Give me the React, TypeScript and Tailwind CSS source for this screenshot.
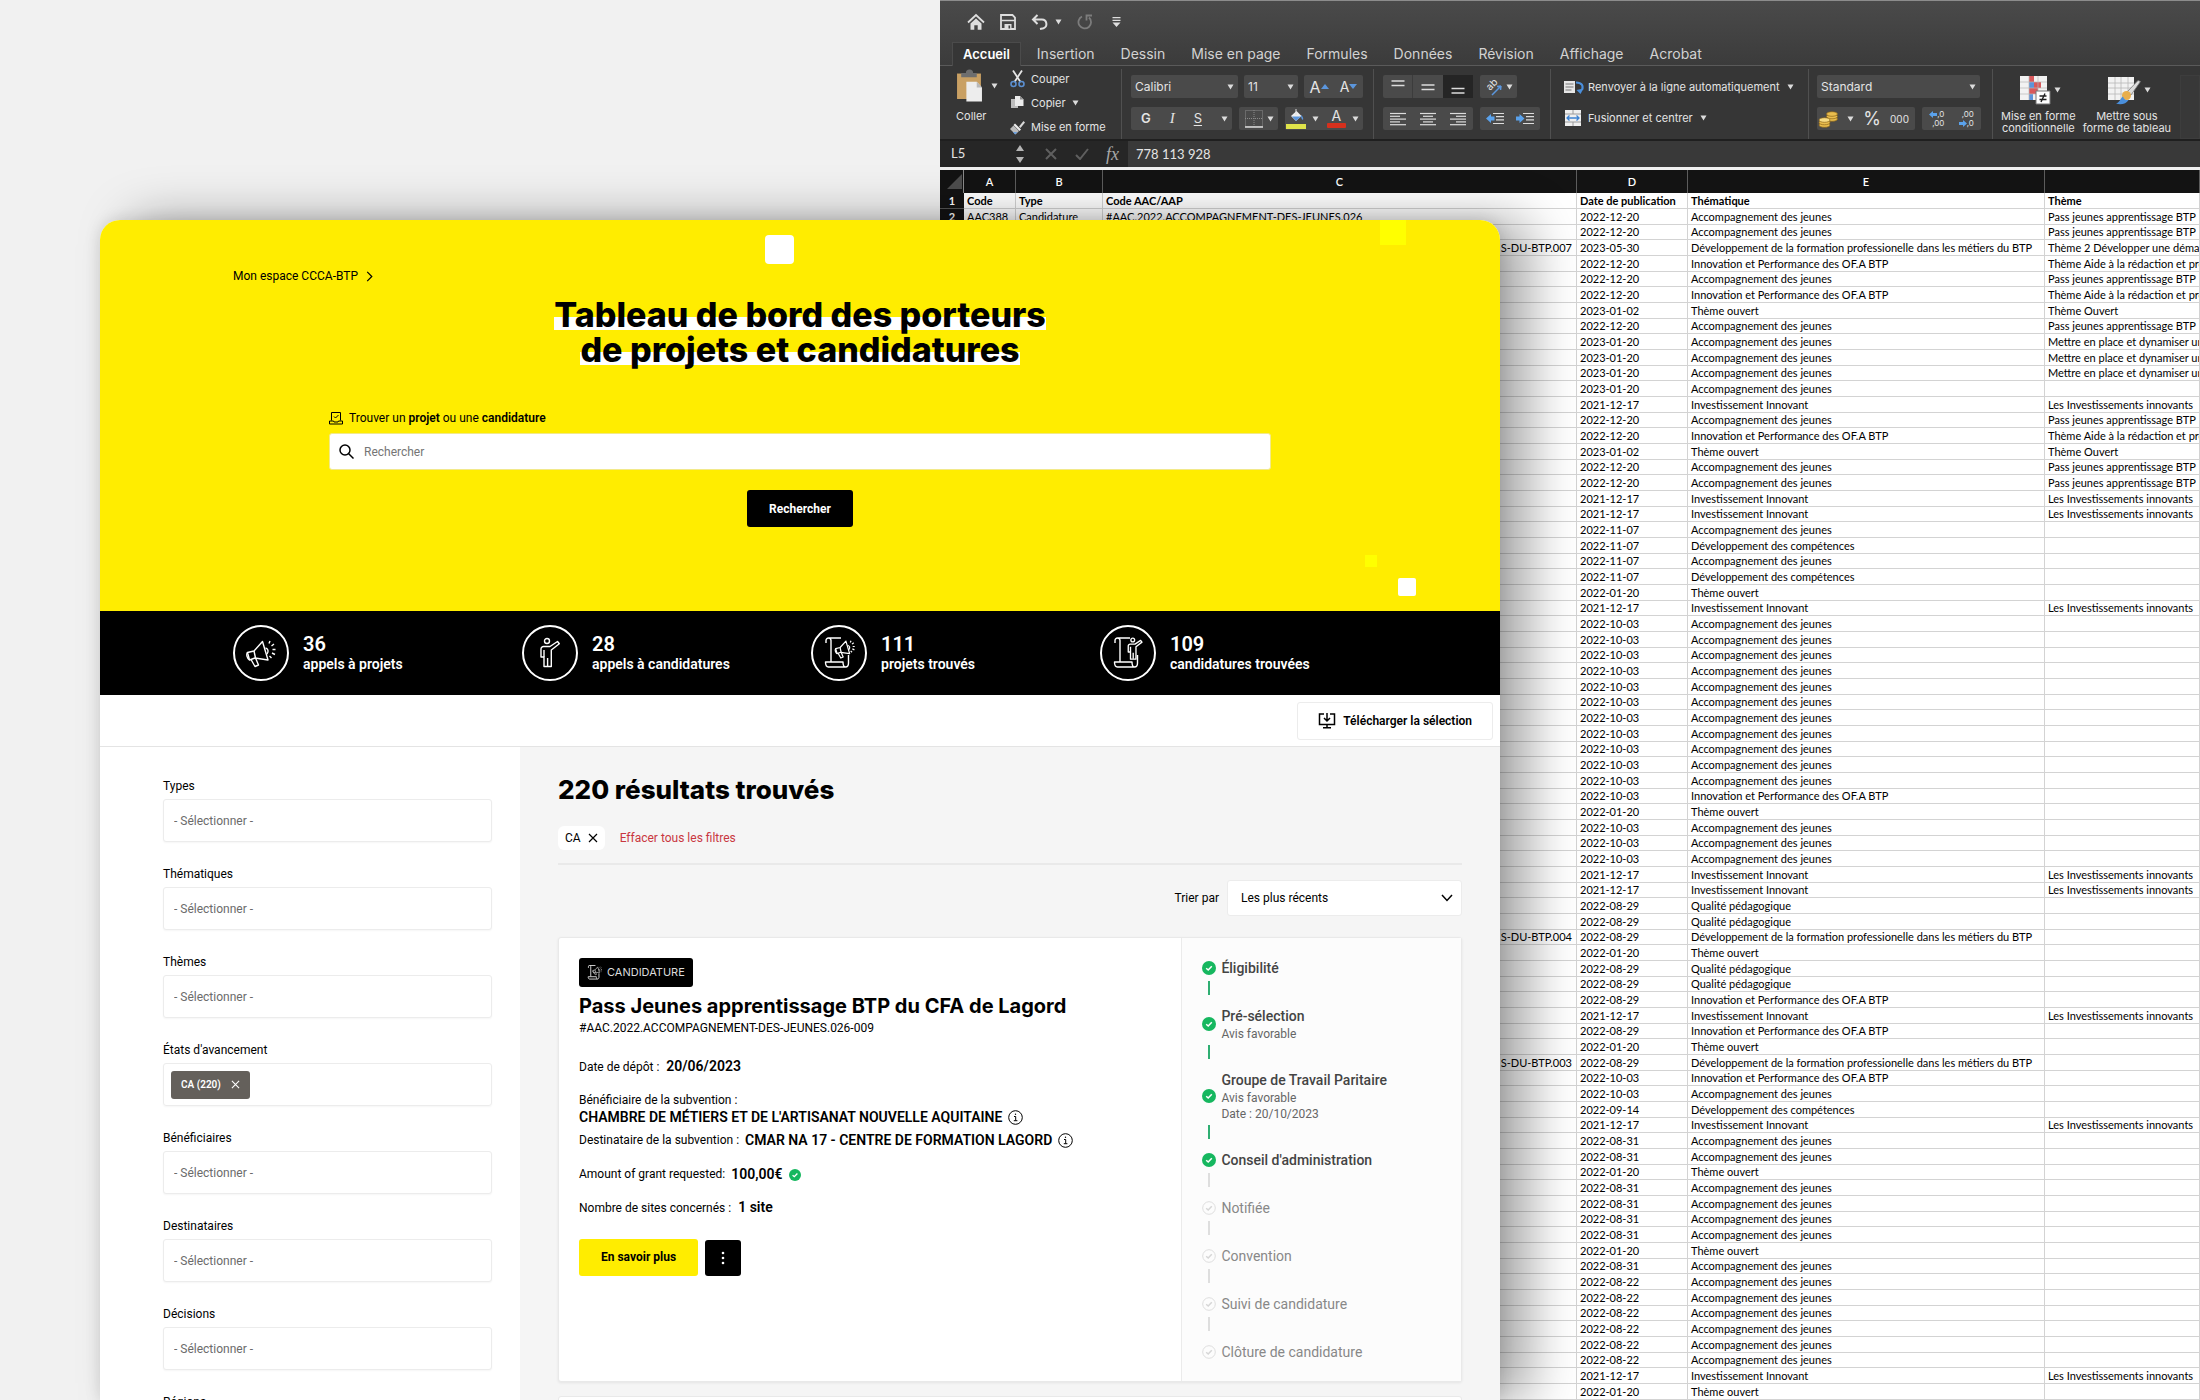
import React from 'react';

/* ------------------------------------------------------------------ */
/* Spreadsheet data                                                    */
/* ------------------------------------------------------------------ */

type Row = [date: string, topic: string, theme?: string, code?: string];

const AJ = 'Accompagnement des jeunes';
const DF = 'Développement de la formation professionelle dans les métiers du BTP';
const IP = 'Innovation et Performance des OF.A BTP';
const TO = 'Thème ouvert';
const II = 'Investissement Innovant';
const DC = 'Développement des compétences';
const QP = 'Qualité pédagogique';

const PASS = 'Pass jeunes apprentissage BTP';
const AIDE = 'Thème Aide à la rédaction et prés';
const METTRE = 'Mettre en place et dynamiser un';
const LES = 'Les Investissements innovants';

const repeat = (count: number, row: Row): Row[] => Array.from({ length: count }, () => row);

const rows: Row[] = [
  ['2022-12-20', AJ, PASS],
  ['2022-12-20', AJ, PASS],
  ['2023-05-30', DF, 'Thème 2 Développer une démarc', 'S-DU-BTP.007'],
  ['2022-12-20', IP, AIDE],
  ['2022-12-20', AJ, PASS],
  ['2022-12-20', IP, AIDE],
  ['2023-01-02', TO, 'Thème Ouvert'],
  ['2022-12-20', AJ, PASS],
  ...repeat(3, ['2023-01-20', AJ, METTRE]),
  ['2023-01-20', AJ],
  ['2021-12-17', II, LES],
  ['2022-12-20', AJ, PASS],
  ['2022-12-20', IP, AIDE],
  ['2023-01-02', TO, 'Thème Ouvert'],
  ['2022-12-20', AJ, PASS],
  ['2022-12-20', AJ, PASS],
  ['2021-12-17', II, LES],
  ['2021-12-17', II, LES],
  ['2022-11-07', AJ],
  ['2022-11-07', DC],
  ['2022-11-07', AJ],
  ['2022-11-07', DC],
  ['2022-01-20', TO],
  ['2021-12-17', II, LES],
  ...repeat(11, ['2022-10-03', AJ]),
  ['2022-10-03', IP],
  ['2022-01-20', TO],
  ...repeat(3, ['2022-10-03', AJ]),
  ['2021-12-17', II, LES],
  ['2021-12-17', II, LES],
  ['2022-08-29', QP],
  ['2022-08-29', QP],
  ['2022-08-29', DF, '', 'S-DU-BTP.004'],
  ['2022-01-20', TO],
  ['2022-08-29', QP],
  ['2022-08-29', QP],
  ['2022-08-29', IP],
  ['2021-12-17', II, LES],
  ['2022-08-29', IP],
  ['2022-01-20', TO],
  ['2022-08-29', DF, '', 'S-DU-BTP.003'],
  ['2022-10-03', IP],
  ['2022-10-03', AJ],
  ['2022-09-14', DC],
  ['2021-12-17', II, LES],
  ['2022-08-31', AJ],
  ['2022-08-31', AJ],
  ['2022-01-20', TO],
  ...repeat(4, ['2022-08-31', AJ]),
  ['2022-01-20', TO],
  ['2022-08-31', AJ],
  ...repeat(6, ['2022-08-22', AJ]),
  ['2021-12-17', II, LES],
  ['2022-01-20', TO],
];

/* ------------------------------------------------------------------ */
/* Spreadsheet window                                                  */
/* ------------------------------------------------------------------ */

function Caret({ className = '' }: { className?: string }) {
  return (
    <svg viewBox="0 0 8 7" className={`h-[6px] w-[7px] shrink-0 fill-[#dcdcdc] ${className}`} aria-hidden="true">
      <path d="M0.5 0.5h7L4 6.5z" />
    </svg>
  );
}

function QuickBar() {
  return (
    <div className="flex h-[41px] items-center gap-[15px] pl-[27px] text-[#dedede]">
      <button aria-label="Accueil">
        <svg viewBox="0 0 18 18" className="size-[18px]" fill="none" stroke="currentColor" strokeWidth="1.8">
          <path d="M1 9.5 9 2l8 7.5" />
          <path d="M3.5 10.5 9 5.5l5.5 5v6.3h-3.8v-4.5H7.3v4.5H3.5z" fill="currentColor" stroke="none" />
        </svg>
      </button>
      <button aria-label="Enregistrer">
        <svg viewBox="0 0 16 16" className="size-[16px]" fill="none" stroke="currentColor" strokeWidth="1.8">
          <path d="M1 1h11.5L15 3.5V15H1z" />
          <path d="M1.5 6.5h13" strokeWidth="1.5" />
          <path d="M4.5 10h7v5h-7z" fill="currentColor" stroke="none" />
          <path d="M8.5 11.5h1.6v3H8.5z" fill="#404040" stroke="none" />
        </svg>
      </button>
      <div className="flex items-center gap-[6px]">
        <button aria-label="Annuler">
          <svg viewBox="0 0 18 16" className="h-[16px] w-[18px]" fill="none" stroke="currentColor" strokeWidth="2">
            <path d="M6.5 1 2 5.5 6.500 10M2 5.5h9a4.500 4.500 0 0 1 1.5 8.700L9 15" />
          </svg>
        </button>
        <Caret />
      </div>
      <button aria-label="Rétablir" className="text-[#7c7c7c]">
        <svg viewBox="0 0 16 16" className="size-[16px]" fill="none" stroke="currentColor" strokeWidth="1.8">
          <path d="M5 2.5A6.300 6.300 0 1 0 12 3.500M9.500 6.500V1.500h5.500" />
        </svg>
      </button>
      <button aria-label="Personnaliser" className="ml-[4px]">
        <svg viewBox="0 0 9 10" className="h-[10px] w-[9px]" fill="currentColor">
          <path d="M0.5 0h8v1.200h-8zM0.5 2.800h8V4h-8zM0.5 5.500h8L4.500 10z" />
        </svg>
      </button>
    </div>
  );
}

const tabs = ['Insertion', 'Dessin', 'Mise en page', 'Formules', 'Données', 'Révision', 'Affichage', 'Acrobat'];

function RibbonTabs() {
  return (
    <nav className="flex h-[24px] items-stretch gap-[26px] border-b border-[#5a5a5a] pl-[12px] text-[14px] text-[#d2d2d2]">
      <button className="-mr-[10px] -mb-px border-x border-t border-[#4b4b4b] bg-[#363636] px-[10px] text-[13px] font-semibold text-white">
        Accueil
      </button>
      {tabs.map((tab) => (
        <button key={tab} className="whitespace-nowrap">
          {tab}
        </button>
      ))}
    </nav>
  );
}

const box = 'flex h-[23px] items-center rounded-[2px] bg-[#4a4a4a] text-[#e4e4e4]';

function Lines({ widths, align }: { widths: number[]; align: 'left' | 'center' | 'right' }) {
  return (
    <svg viewBox="0 0 16 14" className="h-[14px] w-[16px]" stroke="#dcdcdc" strokeWidth="1.2" aria-hidden="true">
      {widths.map((w, i) => {
        const x = align === 'left' ? 0 : align === 'center' ? (16 - w) / 2 : 16 - w;
        return <path key={i} d={`M${x} ${1.5 + i * 2.8}h${w}`} />;
      })}
    </svg>
  );
}

function VLines({ y }: { y: number }) {
  return (
    <svg viewBox="0 0 14 16" className="h-[16px] w-[14px]" stroke="#dcdcdc" strokeWidth="1.3" aria-hidden="true">
      <path d={`M0.5 ${y}h13M0.5 ${y + 4.5}h13`} />
    </svg>
  );
}

function Indent({ flip }: { flip?: boolean }) {
  return (
    <svg viewBox="0 0 18 14" className="h-[14px] w-[18px]" aria-hidden="true">
      <path d="M7 1.5h11M10 4.7h8M10 7.9h8M7 11.5h11" stroke="#dcdcdc" strokeWidth="1.2" />
      {flip ? <path d="M0 4.5h3.5V2l5 4.5-5 4.5V8.5H0z" fill="#5aa2ec" /> : <path d="M8.5 4.5H5V2L0 6.5 5 11V8.5h3.5z" fill="#5aa2ec" />}
    </svg>
  );
}

function ClipboardGroup() {
  return (
    <div className="flex w-[182px] shrink-0 border-r border-[#505050] pl-[16px]">
      <button className="flex w-[44px] flex-col items-start">
        <span className="flex items-center gap-[8px]">
          <svg viewBox="0 0 26 32" className="h-[34px] w-[27px]" aria-hidden="true">
            <path d="M1 4h23v24.5H1z" fill="#c9a063" />
            <path d="M5 3.500h4.500a3.500 3.500 0 0 1 7 0H20v4H5z" fill="#6e6e6e" />
            <path d="M10 12h10l5 5.500V31H10z" fill="#ededed" />
            <path d="M20 12v5.500h5z" fill="#b9b9b9" />
          </svg>
          <Caret />
        </span>
        <span className="mt-[6px] text-[11px] leading-[14px]">Coller</span>
      </button>
      <div className="ml-[10px] flex flex-col gap-[8px] pt-[2px] text-[11px] leading-[16px]">
        <button className="flex items-center gap-[6px]">
          <svg viewBox="0 0 15 18" className="-my-px h-[18px] w-[15px]" fill="none" aria-hidden="true">
            <path d="M3 0.5 10.500 12M12 0.5 4.500 12" stroke="#e6e6e6" strokeWidth="1.8" />
            <circle cx="3.500" cy="14" r="2.500" stroke="#5b8fd0" strokeWidth="1.6" />
            <circle cx="11.500" cy="14" r="2.500" stroke="#5b8fd0" strokeWidth="1.6" />
          </svg>
          Couper
        </button>
        <button className="flex items-center gap-[6px]">
          <svg viewBox="0 0 15 16" className="h-[16px] w-[15px]" aria-hidden="true">
            <path d="M1 4h7v9H1z" fill="#bdbdbd" />
            <path d="M5 1h5l3.500 3.500V11H5z" fill="#ececec" />
            <path d="M10 1v3.500h3.500z" fill="#8d8d8d" />
          </svg>
          Copier
          <Caret />
        </button>
        <button className="flex items-center gap-[6px] whitespace-nowrap">
          <svg viewBox="0 0 15 15" className="size-[15px]" aria-hidden="true">
            <path d="M9 6.500 13.500 1 15 2.500 10.500 8z" fill="#d8d8d8" />
            <path d="m5 3.500 6 6L9.500 11l-6-6z" fill="#f0f0f0" />
            <path d="m3.500 5.500 5.500 5.500-3.500 3.500L0 9z" fill="#bcbcbc" />
            <path d="M3 12h4.500L5 14.500z" fill="#6ba1e0" />
          </svg>
          Mise en forme
        </button>
      </div>
    </div>
  );
}

function FontGroup() {
  return (
    <div className="flex w-[252px] shrink-0 flex-col gap-[9px] border-r border-[#505050] pt-[6px] pl-[9px]">
      <div className="flex gap-[6px]">
        <div className={`${box} w-[107px] pr-[4px]`}>
          <select aria-label="Police" className="w-full appearance-none pl-[4px] text-[12px] leading-[16px] outline-none">
            <option>Calibri</option>
          </select>
          <Caret />
        </div>
        <div className={`${box} w-[54px] pr-[4px]`}>
          <select aria-label="Taille" className="w-full appearance-none pl-[4px] text-[12px] leading-[16px] outline-none">
            <option>11</option>
          </select>
          <Caret />
        </div>
        <div className={`${box} w-[59px] justify-around`}>
          <button className="flex items-center text-[16px] leading-none" aria-label="Agrandir">
            A
            <svg viewBox="0 0 8 5" className="h-[5px] w-[8px] fill-[#5b96dd]">
              <path d="M0 5 4 0l4 5z" />
            </svg>
          </button>
          <button className="flex items-center text-[14px] leading-none" aria-label="Réduire">
            A
            <svg viewBox="0 0 8 5" className="h-[5px] w-[8px] fill-[#5b96dd]">
              <path d="M0 0h8L4 5z" />
            </svg>
          </button>
        </div>
      </div>
      <div className="flex gap-[7px]">
        <div className={`${box} w-[101px] justify-between pr-[4px] pl-[10px] text-[13px] leading-none`}>
          <button className="font-semibold">G</button>
          <button className="font-['Liberation_Serif'] text-[15px] italic">I</button>
          <button className="underline underline-offset-2">S</button>
          <Caret />
        </div>
        <div className={`${box} w-[39px] justify-between pr-[4px] pl-[6px]`}>
          <svg viewBox="0 0 18 18" className="size-[18px]" fill="none" stroke="#8a8a8a" aria-hidden="true">
            <path d="M0.5 0.5h17v16h-17zM9 0v17M0 8.500h18" strokeDasharray="1 1" />
            <path d="M0 17h18" stroke="#dedede" strokeWidth="1.5" />
          </svg>
          <Caret />
        </div>
        <div className={`${box} w-[78px] justify-between pr-[4px] pl-px`}>
          <svg viewBox="0 0 20 20" className="h-[20px] w-[20px]" aria-hidden="true">
            <path d="M5 7 10.500 2l5 5-5.500 5z" fill="#f0f0f0" />
            <path d="M6 7.500h9L10 12z" fill="#5b96dd" />
            <path d="M15 6c2 1.500 2.500 3.500 2 5-1.500-.5-2-2.500-2-5z" fill="#5b96dd" />
            <path d="M10 0v6" stroke="#dedede" />
            <path d="M0 15h20v5H0z" fill="#dfe34a" />
          </svg>
          <Caret />
          <span className="ml-[2px] flex w-[20px] flex-col items-center text-[14px] leading-[14px]">
            A
            <span className="h-[5px] w-[19px] rounded-[1px] bg-[#d6301d]" />
          </span>
          <Caret />
        </div>
      </div>
    </div>
  );
}

function AlignGroup() {
  return (
    <div className="flex w-[177px] shrink-0 flex-col gap-[9px] border-r border-[#505050] pt-[6px] pl-[9px]">
      <div className="flex gap-[7px]">
        <div className={`${box} w-[90px]`}>
          <button aria-label="Haut" className="flex h-full w-[30px] items-center justify-center border-r border-[#3c3c3c]">
            <VLines y={2} />
          </button>
          <button aria-label="Milieu" className="flex h-full w-[30px] items-center justify-center">
            <VLines y={6} />
          </button>
          <button aria-label="Bas" className="flex h-full w-[30px] items-center justify-center bg-[#252525]">
            <VLines y={9.5} />
          </button>
        </div>
        <div className={`${box} w-[37px] justify-between pr-[4px] pl-[4px]`}>
          <svg viewBox="0 0 20 20" className="size-[20px] overflow-visible" aria-hidden="true">
            <text fontSize="10" fill="#e4e4e4" transform="translate(6 14) rotate(-45)">
              ab
            </text>
            <path d="m8 18 9-9m0 0-4 .5M17 9l-.5 4" stroke="#5b96dd" strokeWidth="1.5" fill="none" />
          </svg>
          <Caret />
        </div>
      </div>
      <div className="flex gap-[7px]">
        <div className={`${box} w-[90px] justify-around`}>
          <button aria-label="Gauche">
            <Lines widths={[16, 10, 16, 10, 16]} align="left" />
          </button>
          <button aria-label="Centre">
            <Lines widths={[16, 10, 16, 10, 16]} align="center" />
          </button>
          <button aria-label="Droite">
            <Lines widths={[16, 10, 16, 10, 16]} align="right" />
          </button>
        </div>
        <div className={`${box} w-[60px] justify-around`}>
          <button aria-label="Diminuer le retrait">
            <Indent />
          </button>
          <button aria-label="Augmenter le retrait">
            <Indent flip />
          </button>
        </div>
      </div>
    </div>
  );
}

function WrapGroup() {
  return (
    <div className="flex w-[258px] shrink-0 flex-col gap-[15px] border-r border-[#505050] pt-[10px] pl-[13px] text-[11px] leading-[16px]">
      <button className="flex items-center gap-[4px] whitespace-nowrap">
        <svg viewBox="0 0 20 16" className="h-[16px] w-[20px]" aria-hidden="true">
          <path d="M0 2h11v12H0z" fill="#e6e6e6" />
          <path d="M1.500 5h8M1.500 8h8M1.500 11h6" stroke="#777" />
          <path d="M12 3.500c6 0 7.500 3 6 7.500" stroke="#4a8fdc" strokeWidth="2.2" fill="none" />
          <path d="m12.500 11 7-1.500-3 5.500z" fill="#4a8fdc" />
        </svg>
        Renvoyer à la ligne automatiquement
        <Caret className="ml-[3px]" />
      </button>
      <button className="flex items-center gap-[4px] whitespace-nowrap">
        <svg viewBox="0 0 20 16" className="h-[16px] w-[20px]" aria-hidden="true">
          <path d="M1 0h16v16H1z" fill="#efefef" />
          <path d="M1 4h16M1 12h16M9 0v4M9 12v4" stroke="#9a9a9a" />
          <path d="M3 8h12M5.500 5.500 3 8l2.500 2.500M12.500 5.500 15 8l-2.500 2.500" stroke="#3c82d2" strokeWidth="1.3" fill="none" />
        </svg>
        Fusionner et centrer
        <Caret className="ml-[3px]" />
      </button>
    </div>
  );
}

function NumberGroup() {
  return (
    <div className="flex w-[184px] shrink-0 flex-col gap-[9px] border-r border-[#505050] pt-[6px] pl-[8px]">
      <div className={`${box} w-[163px] pr-[4px]`}>
        <select aria-label="Format" className="w-full appearance-none pl-[4px] text-[12px] leading-[16px] outline-none">
          <option>Standard</option>
        </select>
        <Caret />
      </div>
      <div className="flex gap-[7px]">
        <div className={`${box} w-[98px] justify-between pr-[6px] pl-px leading-none`}>
          <svg viewBox="0 0 20 18" className="h-[18px] w-[20px]" aria-hidden="true">
            <g fill="#e9bd4e" stroke="#8b6418" strokeWidth="0.7">
              <ellipse cx="14" cy="9" rx="5.500" ry="2.300" />
              <ellipse cx="14" cy="6.500" rx="5.500" ry="2.300" />
              <ellipse cx="14" cy="4" rx="5.500" ry="2.300" />
              <ellipse cx="6.500" cy="15" rx="5.500" ry="2.300" />
              <ellipse cx="6.500" cy="12.500" rx="5.500" ry="2.300" />
              <ellipse cx="6.500" cy="10" rx="5.500" ry="2.300" fill="#f7dc84" />
            </g>
          </svg>
          <Caret />
          <button className="text-[18px]">%</button>
          <button className="text-[10px]">000</button>
        </div>
        <div className={`${box} w-[59px] justify-around text-[8px] leading-[9px]`}>
          <button className="flex flex-col items-end">
            <span className="flex items-center">
              <svg viewBox="0 0 8 7" className="h-[7px] w-[8px] fill-[#5aa2ec]">
                <path d="M0 3.500 4 0v2h4v3H4v2z" />
              </svg>
              ,0
            </span>
            <span>,00</span>
          </button>
          <button className="flex flex-col items-end">
            <span>,00</span>
            <span className="flex items-center">
              <svg viewBox="0 0 8 7" className="h-[7px] w-[8px] fill-[#5aa2ec]">
                <path d="M8 3.500 4 0v2H0v3h4v2z" />
              </svg>
              ,0
            </span>
          </button>
        </div>
      </div>
    </div>
  );
}

function StyleGroup() {
  return (
    <div className="flex min-w-0 flex-1 gap-[7px] overflow-hidden pt-[6px] pl-[8px] text-center text-[11px] leading-[12px]">
      <button className="flex shrink-0 flex-col items-center">
        <span className="ml-[4px] flex items-center gap-[3px]">
          <svg viewBox="0 0 32 30" className="h-[30px] w-[32px]" aria-hidden="true">
            <path d="M1 1h27v24H1z" fill="#f2f2f2" />
            <path d="M10 1h5v6h-5zM10 13h9v6h-9z" fill="#d8595c" />
            <path d="M10 7h12v6H10zM10 19h4v6h-4z" fill="#5d93da" />
            <path d="M15 7h7v6h-7z" fill="#d8595c" />
            <path d="M1 7h27M1 13h27M1 19h27M10 1v24M19 1v24" stroke="#b7b7b7" strokeWidth="0.7" />
            <path d="M17 16h14v13H17z" fill="#fff" stroke="#777" />
            <path d="M20.500 21h7M20.500 24.500h7M26 18.500 22 27" stroke="#222" strokeWidth="1.4" />
          </svg>
          <Caret />
        </span>
        <span className="mt-[5px] whitespace-nowrap">
          Mise en forme
          <br />
          conditionnelle
        </span>
      </button>
      <button className="flex shrink-0 flex-col items-center">
        <span className="ml-[4px] flex items-center gap-[3px]">
          <svg viewBox="0 0 34 30" className="h-[30px] w-[34px]" aria-hidden="true">
            <path d="M1 2h26v23H1z" fill="#f2f2f2" />
            <path d="M1 8h26M1 13h26M1 19h26M8 2v23M14 2v23M21 2v23" stroke="#b7b7b7" strokeWidth="0.8" />
            <path d="M20 17 31 5.500l2.500 1L24 20z" fill="#dcdcdc" stroke="#777" strokeWidth="0.8" />
            <circle cx="19.500" cy="20.500" r="4.500" fill="#e8ae4d" />
            <path d="M16 21.500c1 3 3 4 5.500 3.500-2 4-8 5-12.500 3.500 4-1 4-5 7-7z" fill="#4a8fdc" />
          </svg>
          <Caret />
        </span>
        <span className="mt-[5px] whitespace-nowrap">
          Mettre sous
          <br />
          forme de tableau
        </span>
      </button>
      <div className="ml-[2px] flex-1 border border-[#3d3d3d] bg-[#383838]" />
    </div>
  );
}

function FormulaBar() {
  return (
    <div className="flex h-[26px] items-center bg-[#262626] text-[#e4e4e4]">
      <input aria-label="Cellule" defaultValue="L5" className="w-[60px] pl-[11px] font-['Lato'] text-[13px] outline-none" />
      <svg viewBox="0 0 8 18" className="ml-[16px] h-[18px] w-[8px] fill-[#b4b4b4]" aria-hidden="true">
        <path d="M0 6 4 0l4 6zM0 12h8l-4 6z" />
      </svg>
      <svg viewBox="0 0 12 12" className="ml-[21px] size-[12px]" stroke="#5f5f5f" strokeWidth="2" aria-hidden="true">
        <path d="M1 1l10 10M11 1 1 11" />
      </svg>
      <svg viewBox="0 0 14 12" className="ml-[18px] h-[12px] w-[14px]" stroke="#5f5f5f" strokeWidth="2" fill="none" aria-hidden="true">
        <path d="M1 7l4 4L13 1" />
      </svg>
      <span className="ml-[17px] font-['Liberation_Serif'] text-[18px] leading-none text-[#a8a8a8] italic">fx</span>
      <input
        aria-label="Formule"
        defaultValue="778 113 928"
        className="ml-[9px] h-full min-w-0 flex-1 bg-[#393939] pl-[8px] font-['Lato'] text-[13px] outline-none"
      />
    </div>
  );
}

const cell = 'overflow-hidden border-r border-b border-[#d3d3d3] pl-[3px] whitespace-nowrap';

function Grid() {
  return (
    <table className="w-full table-fixed border-separate border-spacing-0 bg-white text-left font-['Lato'] text-[11px] leading-[14px] text-black">
      <colgroup>
        <col className="w-[24px]" />
        <col className="w-[52px]" />
        <col className="w-[87px]" />
        <col className="w-[474px]" />
        <col className="w-[111px]" />
        <col className="w-[357px]" />
        <col />
      </colgroup>
      <thead>
        <tr className="h-[23px] bg-[#131313] text-center text-white">
          <th className="border-r border-[#8a8a8a]">
            <svg viewBox="0 0 16 16" className="ml-auto size-[16px] fill-[#4d4d4d]" aria-hidden="true">
              <path d="M15 0v15H0z" />
            </svg>
          </th>
          {['A', 'B', 'C', 'D', 'E', ''].map((letter, i) => (
            <th key={i} className="border-r border-[#5c5c5c] text-center font-semibold">
              {letter}
            </th>
          ))}
        </tr>
      </thead>
      <tbody className="[&>tr]:h-[16px] [&>tr:nth-child(3n)]:h-[15px]">
        <tr className="font-bold">
          <td className="border-b border-[#555] bg-[#131313] text-center text-white">1</td>
          <td className={cell}>Code</td>
          <td className={cell}>Type</td>
          <td className={cell}>Code AAC/AAP</td>
          <td className={cell}>Date de publication</td>
          <td className={cell}>Thématique</td>
          <td className={cell}>Thème</td>
        </tr>
        {rows.map(([date, topic, theme, code], i) => (
          <tr key={i}>
            <td className="border-b border-[#555] bg-[#131313] text-center font-bold text-white">{i === 0 ? '2' : ''}</td>
            <td className={cell}>{i === 0 ? 'AAC388' : ''}</td>
            <td className={cell}>{i === 0 ? 'Candidature' : ''}</td>
            <td className={cell}>
              {i === 0 ? '#AAC.2022.ACCOMPAGNEMENT-DES-JEUNES.026' : <span className="block pr-[4px] text-right">{code}</span>}
            </td>
            <td className={cell}>{date}</td>
            <td className={cell}>{topic}</td>
            <td className={cell}>{theme}</td>
          </tr>
        ))}
      </tbody>
    </table>
  );
}

function Spreadsheet() {
  return (
    <section className="col-[3/5] row-start-1 h-screen overflow-hidden border-t border-[#8c8c8c] bg-white font-['Inter'] text-[#e4e4e4]">
      <div className="bg-linear-to-b from-[#4a4a4a] to-[#3b3b3b]">
        <QuickBar />
        <RibbonTabs />
      </div>
      <div className="flex h-[73px] bg-[#363636] pt-[3px]">
        <ClipboardGroup />
        <FontGroup />
        <AlignGroup />
        <WrapGroup />
        <NumberGroup />
        <StyleGroup />
      </div>
      <div className="border-b-[3px] border-[#f0f0f0] bg-[#1f1f1f] pt-[2px]">
        <FormulaBar />
      </div>
      <Grid />
    </section>
  );
}

/* ------------------------------------------------------------------ */
/* Dashboard window                                                    */
/* ------------------------------------------------------------------ */

const megaphone = (
  <>
    <path d="M2.500 15.500 9 14 17.500 4.500 23 23 10 21l-5.500 2z" />
    <path d="M9 14l1.500 7M2.500 15.500c-1.500 2-.5 6 2 7.500M6 22.500l4 7 3.500-1.500-3-7" />
    <path d="M20.500 11c2.500.5 3.500 3.500 1.500 6M24 6.500 25 4M26.500 9l2.500-2M27.500 12.500h3M27 16l3 1.500M24.500 19l2 2" />
  </>
);

const person = (
  <>
    <circle cx="13" cy="4" r="2.500" />
    <path d="M7 20v-8a2.500 2.500 0 0 1 2.500-2.500H16l7.500-5 1.800 2.300-8 6.200v16.500H10V20z" />
    <path d="M10 13v7M13.600 21v8" />
  </>
);

const scroll = <path d="M3 6V3.500A2.500 2.500 0 0 1 5.500 1H18M5.500 1A2.500 2.500 0 0 1 8 3.500V25H2.500c0 3 1 5 3 5H22M8 25h12c0 3 .5 5 2.500 5s3-2 3-4v-8M25.500 5" />;

function StatIcon({ kind }: { kind: 'megaphone' | 'person' | 'projects' | 'applications' }) {
  return (
    <svg viewBox="0 0 32 32" className="size-[32px]" fill="none" stroke="white" strokeWidth="1.4" strokeLinejoin="round" aria-hidden="true">
      {kind === 'megaphone' && megaphone}
      {kind === 'person' && person}
      {kind === 'projects' && (
        <>
          {scroll}
          <g transform="translate(11 1) scale(0.68)" strokeWidth="1.8">
            {megaphone}
          </g>
        </>
      )}
      {kind === 'applications' && (
        <>
          {scroll}
          <g transform="translate(11 0) scale(0.75)" strokeWidth="1.8">
            {person}
          </g>
        </>
      )}
    </svg>
  );
}

const stats = [
  { kind: 'megaphone', value: '36', label: 'appels à projets' },
  { kind: 'person', value: '28', label: 'appels à candidatures' },
  { kind: 'projects', value: '111', label: 'projets trouvés' },
  { kind: 'applications', value: '109', label: 'candidatures trouvées' },
] as const;

const mark = 'mx-auto block w-fit bg-[linear-gradient(transparent_20px,#fff_20px,#fff_33px,transparent_33px)]';

function Hero() {
  return (
    <header className="relative h-[391px] bg-[#ffed00] px-[133px] pt-[48px]">
      <span className="absolute top-[15px] left-[665px] size-[29px] rounded-[4px] bg-white" />
      <span className="absolute top-0 right-[94px] h-[25px] w-[26px] bg-[#ffff00]" />
      <span className="absolute right-[123px] bottom-[44px] size-[12px] bg-[#ffff00]" />
      <span className="absolute right-[84px] bottom-[15px] size-[18px] rounded-[2px] bg-white" />
      <a href="#espace" className="flex w-fit items-center gap-[8px] text-[12px] leading-[16px]">
        Mon espace CCCA-BTP
        <svg viewBox="0 0 7 12" className="h-[11px] w-[7px]" fill="none" stroke="black" strokeWidth="1.3" aria-hidden="true">
          <path d="M1 1l5 5-5 5" />
        </svg>
      </a>
      <h1 className="mt-[13px] font-['Inter'] text-[34px] leading-[35px] font-extrabold">
        <span className={mark}>Tableau de bord des porteurs</span>
        <span className={mark}>de projets et candidatures</span>
      </h1>
      <form className="mx-[96px] mt-[43px] flex flex-col" onSubmit={(e) => e.preventDefault()}>
        <label htmlFor="search" className="flex items-center gap-[6px] text-[12px] leading-[16px]">
          <svg viewBox="0 0 14 13" className="h-[13px] w-[14px]" fill="none" stroke="black" aria-hidden="true">
            <path d="M2.500 8.500v-8h9v8M0.500 9h4l.5 1h4l.5-1h4v3h-13zM5 4.500 6.500 6l3-3" />
          </svg>
          <span>
            Trouver un <b className="font-semibold">projet</b> ou une <b className="font-semibold">candidature</b>
          </span>
        </label>
        <div className="mt-[7px] flex h-[37px] items-center rounded-[3px] border border-[#f2e98a] bg-white pl-[9px]">
          <svg viewBox="0 0 15 15" className="size-[15px]" fill="none" stroke="black" strokeWidth="1.5" aria-hidden="true">
            <circle cx="6" cy="6" r="5" />
            <path d="m9.500 9.500 5 5" />
          </svg>
          <input id="search" placeholder="Rechercher" className="h-full flex-1 px-[10px] text-[12px] outline-none placeholder:text-[#757575]" />
        </div>
        <button className="mx-auto mt-[20px] h-[37px] rounded-[3px] bg-black px-[22px] text-[12px] font-bold text-white">Rechercher</button>
      </form>
    </header>
  );
}

function Stats() {
  return (
    <div className="grid h-[84px] grid-cols-4 items-center gap-[22px] bg-black px-[133px] text-white">
      {stats.map((s) => (
        <div key={s.label} className="flex items-center gap-[14px]">
          <span className="flex size-[56px] shrink-0 items-center justify-center rounded-full border-2 border-white">
            <StatIcon kind={s.kind} />
          </span>
          <p className="text-[14px] leading-[18px] font-semibold whitespace-nowrap">
            <span className="block text-[20px] leading-[22px]">{s.value}</span>
            {s.label}
          </p>
        </div>
      ))}
    </div>
  );
}

function Cross({ className }: { className: string }) {
  return (
    <svg viewBox="0 0 10 10" className={className} stroke="currentColor" strokeWidth="1.2" aria-hidden="true">
      <path d="M1 1l8 8M9 1 1 9" />
    </svg>
  );
}

const filters = ['Types', 'Thématiques', 'Thèmes', "États d'avancement", 'Bénéficiaires', 'Destinataires', 'Décisions', 'Régions'];

function Filters() {
  return (
    <aside className="w-[30%] shrink-0 bg-white pt-[30px] pr-[28px] pl-[63px]">
      {filters.map((name, i) => (
        <div key={name} className="mb-[23px]">
          <label htmlFor={`filter-${i}`} className="block pb-[3px] text-[12px] leading-[19px]">
            {name}
          </label>
          {i === 3 ? (
            <div className="flex h-[43px] items-center rounded-[3px] border border-[#ececec] pl-[7px] shadow-[0_1px_2px_#0000000a]">
              <span className="flex h-[28px] items-center gap-[10px] rounded-[3px] bg-[#64605b] px-[10px] text-[10px] font-semibold text-white">
                CA (220)
                <button aria-label="Retirer CA">
                  <Cross className="size-[9px]" />
                </button>
              </span>
              <input id={`filter-${i}`} className="min-w-0 flex-1 outline-none" />
            </div>
          ) : (
            <select
              id={`filter-${i}`}
              className="block h-[43px] w-full appearance-none rounded-[3px] border border-[#ececec] bg-white px-[10px] text-[12px] text-[#6b6b6b] shadow-[0_1px_2px_#0000000a]"
            >
              <option>- Sélectionner -</option>
            </select>
          )}
        </div>
      ))}
    </aside>
  );
}

function CheckBadge({ done, className }: { done: boolean; className: string }) {
  return (
    <svg viewBox="0 0 14 14" className={className} fill="none" aria-hidden="true">
      {done ? <circle cx="7" cy="7" r="7" fill="#16b75f" /> : <circle cx="7" cy="7" r="6.3" stroke="#dedede" />}
      <path d="M4.200 7.200 6.200 9l3.600-3.800" stroke={done ? '#fff' : '#d6d6d6'} strokeWidth="1.5" />
    </svg>
  );
}

function InfoIcon() {
  return (
    <svg viewBox="0 0 15 15" className="size-[15px] shrink-0" fill="none" stroke="black" aria-hidden="true">
      <circle cx="7.500" cy="7.500" r="6.800" />
      <path d="M6 6.500h1.700v4M5.800 10.700h3.600" />
      <circle cx="7.500" cy="4.300" r="0.700" fill="black" stroke="none" />
    </svg>
  );
}

const steps = [
  { name: 'Éligibilité', notes: [], done: true },
  { name: 'Pré-sélection', notes: ['Avis favorable'], done: true },
  { name: 'Groupe de Travail Paritaire', notes: ['Avis favorable', 'Date : 20/10/2023'], done: true },
  { name: "Conseil d'administration", notes: [], done: true },
  { name: 'Notifiée', notes: [], done: false },
  { name: 'Convention', notes: [], done: false },
  { name: 'Suivi de candidature', notes: [], done: false },
  { name: 'Clôture de candidature', notes: [], done: false },
];

function Steps() {
  return (
    <ol className="w-[31%] shrink-0 border-l border-[#ebebeb] bg-[#fcfcfc] pt-[20px] pb-[19px] pl-[20px]">
      {steps.map((step, i) => {
        const next = steps[i + 1];
        return (
          <li key={step.name}>
            <div className="flex items-center gap-[5px]">
              <CheckBadge done={step.done} className="size-[14px] shrink-0" />
              <div>
                <p className={step.done ? 'text-[14px] leading-[20px] font-medium text-[#444]' : 'text-[14px] leading-[20px] text-[#888]'}>{step.name}</p>
                {step.notes.map((note) => (
                  <p key={note} className="text-[12px] leading-[16px] text-[#666]">
                    {note}
                  </p>
                ))}
              </div>
            </div>
            {next && <div className={`mt-[3px] mb-[11px] ml-[6px] h-[14px] w-[2px] ${next.done ? 'bg-[#2fae72]' : 'bg-[#dedede]'}`} />}
          </li>
        );
      })}
    </ol>
  );
}

const value = 'text-[14px] font-semibold';

function ResultCard() {
  return (
    <article className="mt-[21px] flex rounded-[3px] border border-[#e9e9e9] bg-white shadow-[0_1px_3px_#00000012]">
      <div className="flex-1 px-[20px] pt-[20px] text-[12px] leading-[17px]">
        <span className="flex h-[29px] w-fit items-center gap-[5px] rounded-[3px] bg-black px-[8px] font-['Inter'] text-[11px] text-[#dcdcdc]">
          <svg viewBox="0 0 32 32" className="size-[15px]" fill="none" stroke="#dcdcdc" strokeWidth="2" aria-hidden="true">
            {scroll}
            <g transform="translate(11 1) scale(0.68)">{megaphone}</g>
          </svg>
          CANDIDATURE
        </span>
        <h3 className="mt-[7px] font-['Inter'] text-[20px] leading-[24px] font-bold whitespace-nowrap">Pass Jeunes apprentissage BTP du CFA de Lagord</h3>
        <p className="mt-[2px]">#AAC.2022.ACCOMPAGNEMENT-DES-JEUNES.026-009</p>
        <p className="mt-[21px]">
          Date de dépôt : <b className={`${value} ml-[4px]`}>20/06/2023</b>
        </p>
        <p className="mt-[16px]">Bénéficiaire de la subvention :</p>
        <p className={`${value} flex items-center gap-[6px]`}>
          CHAMBRE DE MÉTIERS ET DE L'ARTISANAT NOUVELLE AQUITAINE
          <InfoIcon />
        </p>
        <p className="mt-[6px] flex items-center gap-[6px]">
          Destinataire de la subvention : <b className={value}>CMAR NA 17 - CENTRE DE FORMATION LAGORD</b>
          <InfoIcon />
        </p>
        <p className="mt-[17px] flex items-center gap-[6px]">
          Amount of grant requested: <b className={value}>100,00€</b>
          <CheckBadge done className="size-[12px]" />
        </p>
        <p className="mt-[16px]">
          Nombre de sites concernés : <b className={`${value} ml-[4px]`}>1 site</b>
        </p>
        <div className="mt-[22px] flex items-center gap-[7px]">
          <button className="h-[37px] rounded-[3px] bg-[#ffed00] px-[22px] font-bold">En savoir plus</button>
          <button aria-label="Plus d'actions" className="flex size-[36px] items-center justify-center rounded-[3px] bg-black">
            <svg viewBox="0 0 4 14" className="h-[14px] w-[4px] fill-white">
              <circle cx="2" cy="2" r="1.3" />
              <circle cx="2" cy="7" r="1.3" />
              <circle cx="2" cy="12" r="1.3" />
            </svg>
          </button>
        </div>
      </div>
      <Steps />
    </article>
  );
}

function Results() {
  return (
    <main className="min-w-0 flex-1 bg-[#f5f5f5] px-[38px] pt-[27px]">
      <h2 className="font-['Inter'] text-[26px] leading-[32px] font-extrabold">220 résultats trouvés</h2>
      <div className="mt-[20px] flex items-center gap-[15px] border-b-2 border-[#e9e9e9] pb-[13px] text-[12px]">
        <button className="flex h-[24px] items-center gap-[7px] rounded-[6px] bg-white px-[7px]">
          CA
          <Cross className="size-[10px]" />
        </button>
        <a href="#effacer" className="text-[#c9373f]">
          Effacer tous les filtres
        </a>
      </div>
      <div className="mt-[15px] flex items-center justify-end gap-[8px] text-[12px]">
        <label htmlFor="sort">Trier par</label>
        <div className="flex h-[36px] w-[235px] items-center rounded-[3px] border border-[#ececec] bg-white pr-[8px]">
          <select id="sort" className="h-full flex-1 appearance-none pl-[13px] outline-none">
            <option>Les plus récents</option>
          </select>
          <svg viewBox="0 0 12 8" className="h-[8px] w-[12px]" fill="none" stroke="black" strokeWidth="1.5" aria-hidden="true">
            <path d="M1 1l5 5.500L11 1" />
          </svg>
        </div>
      </div>
      <ResultCard />
      <article className="mt-[14px] h-[200px] rounded-[3px] border border-[#e9e9e9] bg-white" />
    </main>
  );
}

function Dashboard() {
  return (
    <section className="col-[2/4] row-start-1 mt-[220px] h-[calc(100vh-220px)] overflow-hidden rounded-t-[20px] bg-white font-['Roboto'] text-black shadow-[0_0_16px_#00000022,30px_0_50px_#00000058]">
      <Hero />
      <Stats />
      <div className="flex h-[52px] items-center justify-end border-b border-[#e4e4e4] pr-[7px]">
        <button className="flex h-[38px] items-center gap-[7px] rounded-[3px] border border-[#ececec] px-[20px] text-[12px] font-semibold">
          <svg viewBox="0 0 18 16" className="h-[16px] w-[18px]" fill="none" stroke="black" strokeWidth="1.5" aria-hidden="true">
            <path d="M6 1H1.500v10.500h15V1H12M9 0v7.500M6 5l3 3 3-3M9 11.500v3M5 14.700h8" />
          </svg>
          Télécharger la sélection
        </button>
      </div>
      <div className="flex">
        <Filters />
        <Results />
      </div>
    </section>
  );
}

export default function App() {
  return (
    <div className="grid h-screen grid-cols-[5fr_42fr_28fr_35fr] overflow-hidden bg-[#f1f1f1] *:min-w-0">
      <Spreadsheet />
      <Dashboard />
    </div>
  );
}
